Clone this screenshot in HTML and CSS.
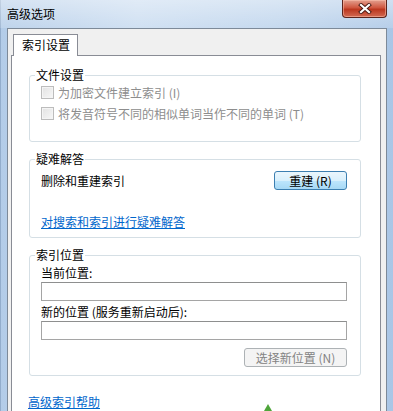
FILE: index.html
```html
<!DOCTYPE html>
<html lang="zh-CN">
<head>
    <meta charset="UTF-8">
    <meta name="viewport" content="width=device-width, initial-scale=1.0">
    <title>高级选项</title>
    <link rel="stylesheet" href="styles.css">
</head>
<body>
    <div class="window">
        <div class="titlebar">
            <span class="title">高级选项</span>
            <button class="close" title="关闭">
                <svg width="14" height="11" viewBox="0 0 14 11">
                    <path d="M3 2 L11 9 M11 2 L3 9" stroke="#4a1a14" stroke-width="4" stroke-linecap="square"/>
                    <path d="M3 2 L11 9 M11 2 L3 9" stroke="#ffffff" stroke-width="2.2" stroke-linecap="square"/>
                </svg>
            </button>
        </div>
        <div class="client">
            <div class="tabs">
                <div class="tab">索引设置</div>
            </div>
            <div class="panel">
                <fieldset class="group files">
                    <legend>文件设置</legend>
                    <label class="check disabled"><span class="box"></span>为加密文件建立索引 (I)</label>
                    <label class="check disabled"><span class="box"></span>将发音符号不同的相似单词当作不同的单词 (T)</label>
                </fieldset>
                <fieldset class="group trouble">
                    <legend>疑难解答</legend>
                    <div class="row">
                        <span>删除和重建索引</span>
                        <button class="btn btn-focus rebuild">重建 (R)</button>
                    </div>
                    <a class="link trouble-link" href="#">对搜索和索引进行疑难解答</a>
                </fieldset>
                <fieldset class="group location">
                    <legend>索引位置</legend>
                    <div class="field-label">当前位置:</div>
                    <input class="text-input" type="text">
                    <div class="field-label">新的位置 (服务重新启动后):</div>
                    <input class="text-input" type="text">
                    <div class="row-end">
                        <button class="btn pick" disabled>选择新位置 (N)</button>
                    </div>
                </fieldset>
                <a class="link help-link" href="#">高级索引帮助</a>
            </div>
        </div>
        <svg class="corner-mark" width="8" height="7" viewBox="0 0 8 7">
            <polygon points="4,0 8,7 0,7" fill="#4ea53a"/>
        </svg>
    </div>
</body>
</html>
```

FILE: styles.css
```css
body {
    margin: 0;
    font-family: "Noto Sans CJK SC", "Noto Sans", sans-serif;
    font-size: 12px;
    color: #000;
    background: #b9d1ea;
}
.window {
    position: relative;
    width: 393px;
    height: 411px;
    overflow: hidden;
    display: flex;
    flex-direction: column;
    background: linear-gradient(to right, #b3cce8, #c8dbf0 35%, #bcd3ec 70%, #aac6e6);
    box-shadow: inset 1px 0 #93adcc;
}
.titlebar {
    height: 28px;
    flex-shrink: 0;
    display: flex;
    justify-content: space-between;
    align-items: flex-start;
    padding-left: 7px;
    box-sizing: border-box;
    background: linear-gradient(to bottom, rgba(255, 255, 255, 0.45), rgba(255, 255, 255, 0.15));
}
.title {
    line-height: 28px;
    color: #000;
}
.close {
    width: 45px;
    height: 18px;
    margin-right: 6px;
    padding: 0;
    border: 1px solid #5b241d;
    border-top: none;
    border-radius: 0 0 4px 4px;
    background: linear-gradient(to bottom, #e3a08f, #cf563f 45%, #bb371f 55%, #d26a53);
    box-shadow: inset 0 0 0 1px rgba(255, 200, 180, 0.5);
    display: flex;
    align-items: center;
    justify-content: center;
}
.client {
    flex: 1;
    display: flex;
    flex-direction: column;
    margin: 0 6px 0 7px;
    border: 1px solid #7d8a99;
    border-bottom: none;
    background: #f0f0f0;
    padding: 5px 5px 0 3px;
}
.tabs {
    display: flex;
    padding-left: 2px;
    position: relative;
    z-index: 1;
    margin-bottom: -1px;
}
.tab {
    background: #fff;
    border: 1px solid #898c95;
    border-bottom: none;
    height: 21px;
    line-height: 20px;
    padding: 0 7px 0 8px;
}
.panel {
    flex: 1;
    background: #fff;
    border: 1px solid #898c95;
    border-bottom: none;
    padding: 12px 19px 0 17px;
}
.group {
    margin: 0;
    min-width: 0;
    border: 1px solid #d5dfe5;
    border-radius: 3px;
    padding: 0 13px 16px 11px;
}
.group + .group {
    margin-top: 10px;
}
.group legend {
    padding: 0 1px;
    margin-left: -6px;
    line-height: 14px;
}
.files {
    padding-bottom: 17px;
}
.check {
    display: flex;
    align-items: center;
    gap: 4px;
    height: 21px;
}
.check.disabled {
    color: #8d8d8d;
}
.box {
    width: 11px;
    height: 11px;
    border: 1px solid #bcbcbc;
    background: linear-gradient(135deg, #e2e2e2, #f7f7f7);
    box-shadow: inset 0 0 0 1px #f4f4f4;
}
.row {
    margin-top: 5px;
    display: flex;
    justify-content: space-between;
    align-items: center;
}
.trouble {
    padding-bottom: 7px;
}
.link {
    display: block;
    color: #0066cc;
    text-decoration: underline;
    line-height: 16px;
}
.trouble-link {
    margin-top: 24px;
}
.btn {
    height: 19px;
    box-sizing: border-box;
    padding: 0;
    font-family: inherit;
    font-size: 12px;
    border: 1px solid #707070;
    border-radius: 3px;
    background: linear-gradient(to bottom, #f2f2f2, #ebebeb 50%, #dddddd 50%, #cfcfcf);
    color: #000;
}
.btn-focus {
    border-color: #3c7fb1;
    background: linear-gradient(to bottom, #eaf6fd, #d9f0fc 50%, #bee6fd 50%, #a7d9f5);
}
.rebuild {
    width: 73px;
}
.btn:disabled {
    border-color: #adb2b5;
    background: #f4f4f4;
    color: #838383;
}
.pick {
    width: 103px;
}
.location {
    padding-bottom: 8px;
}
.field-label {
    margin-top: 3px;
    line-height: 16px;
}
.text-input {
    display: block;
    width: 100%;
    height: 19px;
    box-sizing: border-box;
    margin-top: 1px;
    border: 1px solid #a5a5a5;
    border-top-color: #8e8f8f;
    background: #fff;
}
.row-end {
    margin-top: 8px;
    display: flex;
    justify-content: flex-end;
}
.help-link {
    margin-top: 18px;
    margin-left: -1px;
    width: max-content;
}
.corner-mark {
    position: absolute;
    left: 264px;
    top: 404px;
}
```
